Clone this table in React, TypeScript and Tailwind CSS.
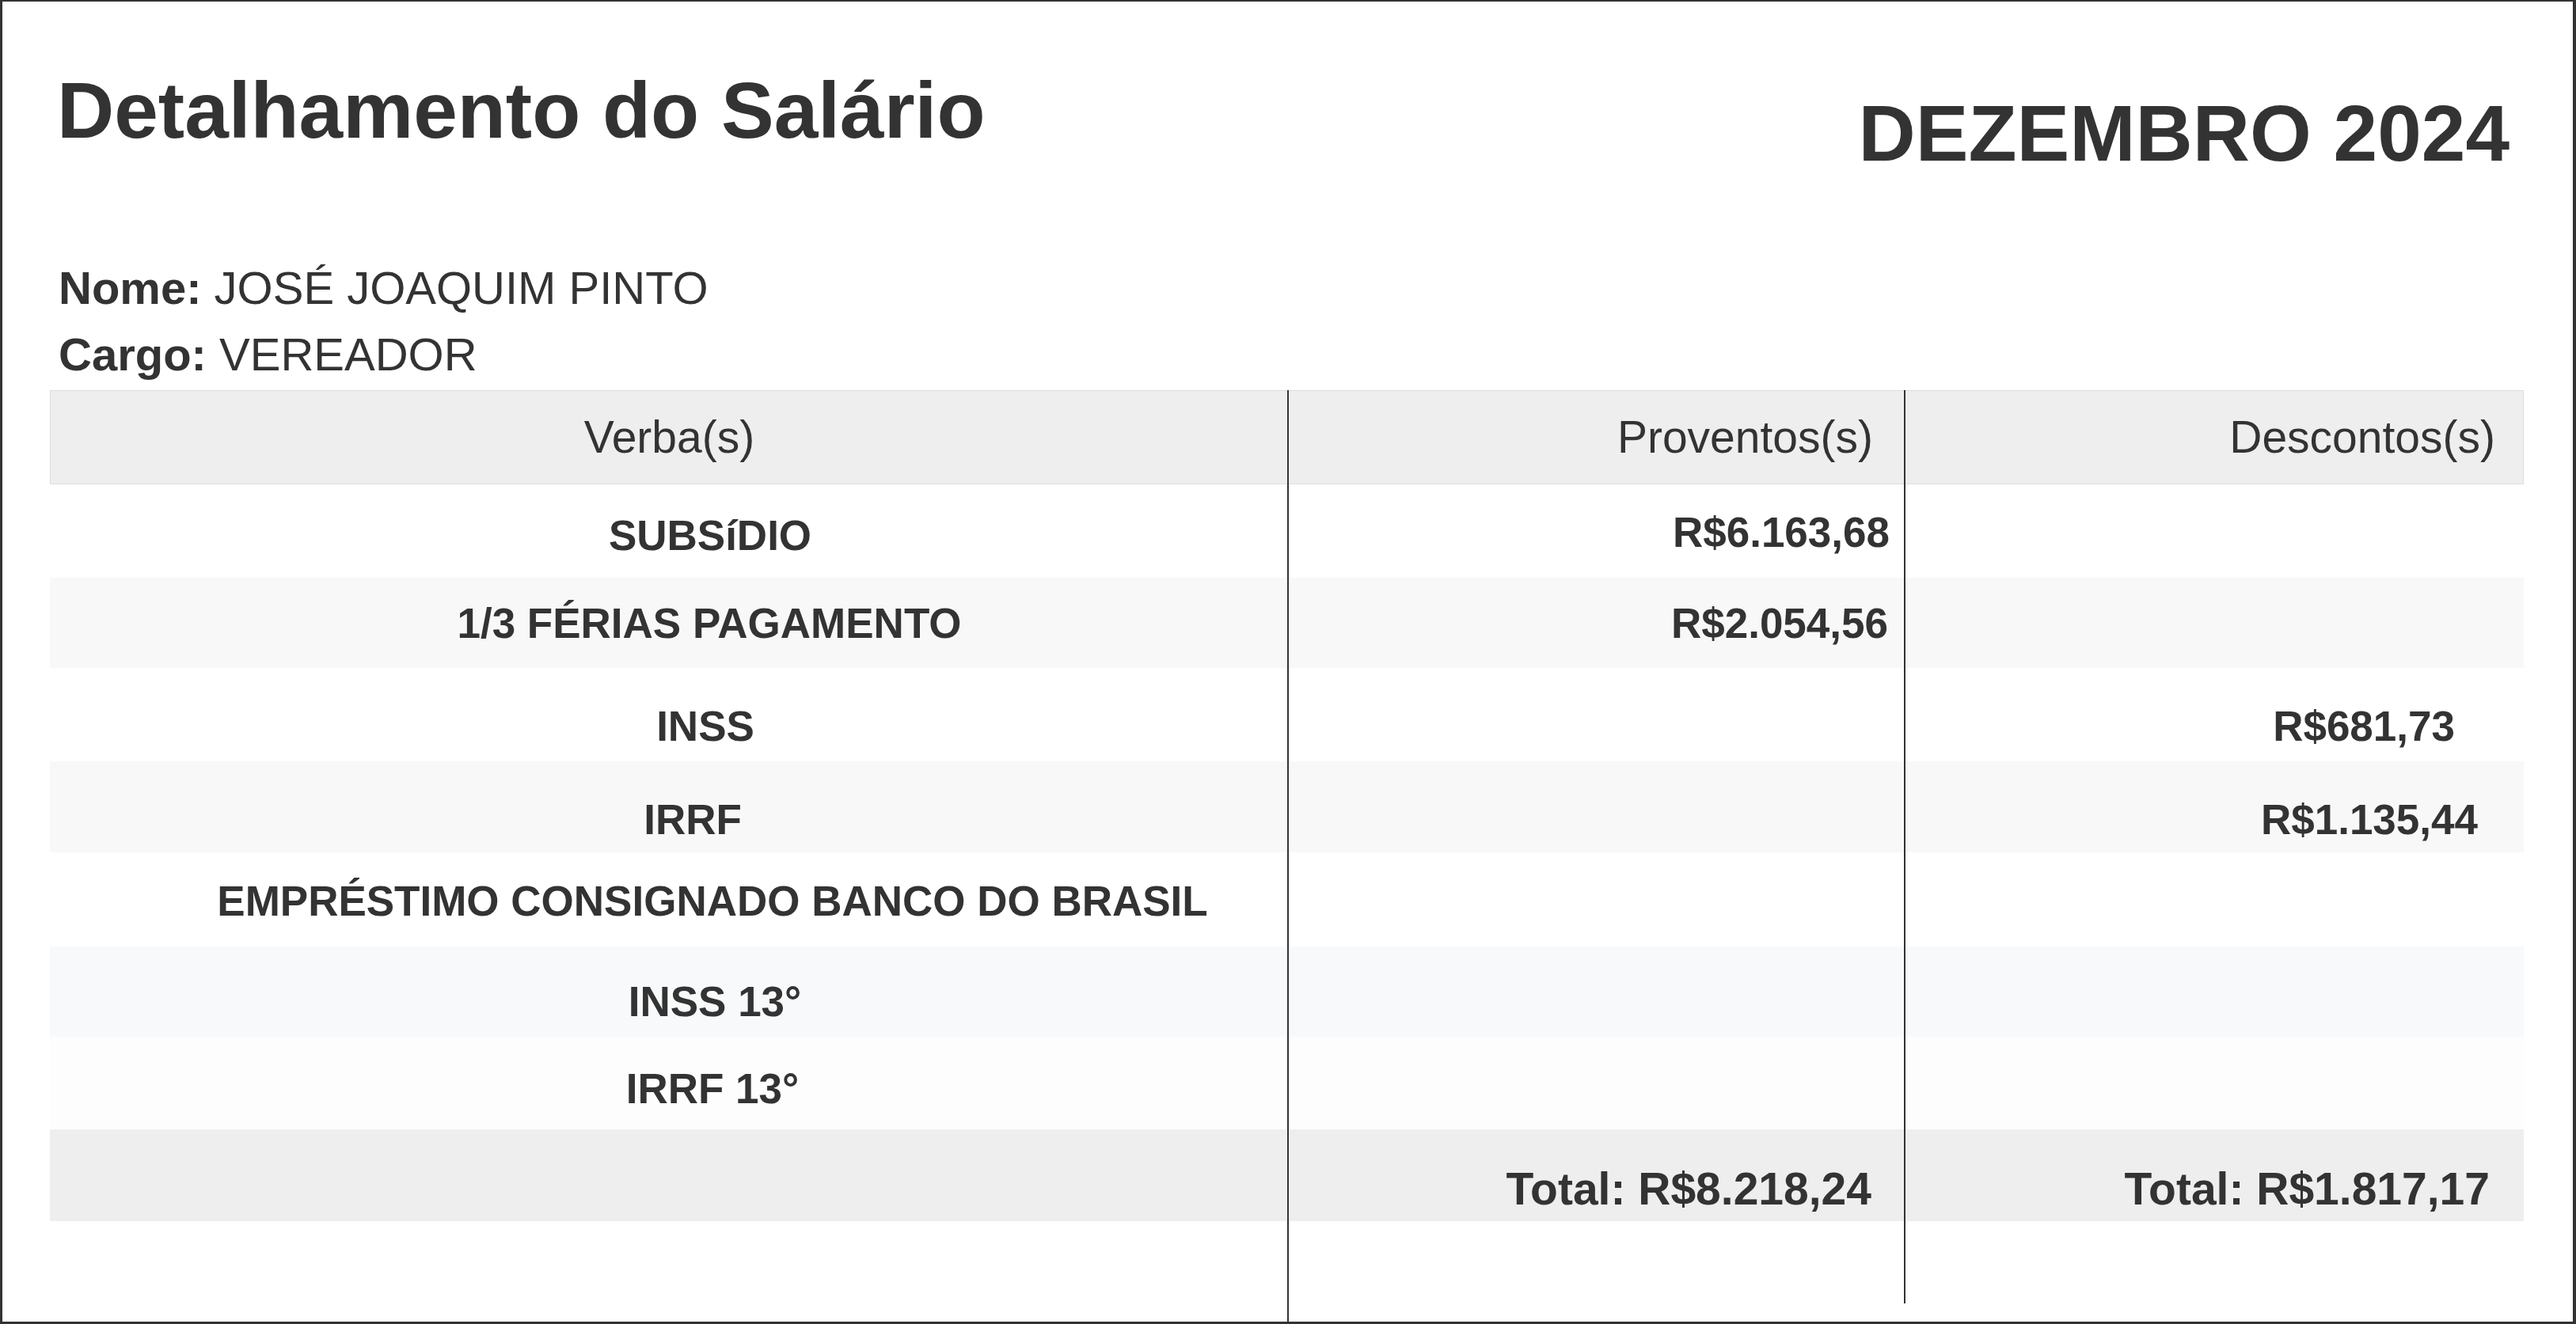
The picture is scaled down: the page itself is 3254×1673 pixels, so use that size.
import React from "react";

type Row = {
  label: string;
  labelPad: string;
  prov?: string;
  provPad?: string;
  desc?: string;
  descPad?: string;
  h: string;
  bg: string;
  pt: string;
  labelPt?: string;
};

const rows: Row[] = [
  { label: "SUBSíDIO", labelPad: "pl-[105px]", labelPt: "pt-[38px]", prov: "R$6.163,68", provPad: "pr-[18px]", h: "h-[118px]", bg: "bg-white", pt: "pt-[34px]" },
  { label: "1/3 FÉRIAS PAGAMENTO", labelPad: "pl-[103px]", prov: "R$2.054,56", provPad: "pr-[20px]", h: "h-[114px]", bg: "bg-[#f8f8f8]", pt: "pt-[31px]" },
  { label: "INSS", labelPad: "pl-[93px]", desc: "R$681,73", descPad: "pr-[87px]", h: "h-[118px]", bg: "bg-white", pt: "pt-[47px]" },
  { label: "IRRF", labelPad: "pl-[61px]", desc: "R$1.135,44", descPad: "pr-[58px]", h: "h-[115px]", bg: "bg-[#f8f8f8]", pt: "pt-[47px]" },
  { label: "EMPRÉSTIMO CONSIGNADO BANCO DO BRASIL", labelPad: "pl-[111px]", h: "h-[119px]", bg: "bg-white", pt: "pt-[35px]" },
  { label: "INSS 13°", labelPad: "pl-[117px]", h: "h-[114px]", bg: "bg-[#f8f9fa]", pt: "pt-[43px]" },
  { label: "IRRF 13°", labelPad: "pl-[111px]", h: "h-[117px]", bg: "bg-[#fdfdfd]", pt: "pt-[39px]" },
];

export default function App() {
  return (
    <div className="w-[3254px] h-[1673px] flex flex-col bg-white text-[#333] font-['Liberation_Sans',Arial,sans-serif] border-t-2 border-l-[3px] border-r-4 border-b-[3px] border-[#333] pl-[60px] pr-[62px] overflow-hidden">
      {/* Top header */}
      <div className="flex justify-between items-start pt-[87px] pl-[9px] pr-[18px]">
        <h1 className="text-[100px] leading-[100px] font-bold whitespace-nowrap">Detalhamento do Salário</h1>
        <div className="mt-[29px] text-[100px] leading-[100px] font-bold whitespace-nowrap">DEZEMBRO 2024</div>
      </div>

      <div className="mt-[104px] pl-[11px] text-[58px] leading-[84px] whitespace-nowrap">
        <div>
          <span className="font-bold">Nome:</span> JOSÉ JOAQUIM PINTO
        </div>
        <div>
          <span className="font-bold">Cargo:</span> VEREADOR
        </div>
      </div>

      {/* Table header */}
      <div className="mt-[3px] grid grid-cols-[1563px_779px_1fr] h-[119px] bg-[#eee] shadow-[inset_0_0_0_1px_#ddd] text-[57px] leading-[57px]">
        <div className="flex items-center justify-center pl-[2px]">Verba(s)</div>
        <div className="flex items-center justify-end pr-[39px] border-l-2 border-[#333]">Proventos(s)</div>
        <div className="flex items-center justify-end pr-[36px] border-l-2 border-[#333]">Descontos(s)</div>
      </div>

      {/* Rows */}
      {rows.map((r, i) => (
        <div key={i} className={`grid grid-cols-[1563px_779px_1fr] text-[53px] leading-[53px] font-bold ${r.h} ${r.bg}`}>
          <div className={`text-center whitespace-nowrap ${r.labelPad} ${r.labelPt ?? r.pt}`}>{r.label}</div>
          <div className={`text-right border-l-2 border-[#333] ${r.pt} ${r.provPad ?? ""}`}>{r.prov ?? ""}</div>
          <div className={`text-right border-l-2 border-[#333] ${r.pt} ${r.descPad ?? ""}`}>{r.desc ?? ""}</div>
        </div>
      ))}

      {/* Totals */}
      <div className="grid grid-cols-[1563px_779px_1fr] h-[116px] bg-[#eee] text-[57px] leading-[57px] font-bold">
        <div />
        <div className="text-right border-l-2 border-[#333] pt-[47px] pr-[41px] whitespace-nowrap">Total: R$8.218,24</div>
        <div className="text-right border-l-2 border-[#333] pt-[47px] pr-[43px] whitespace-nowrap">Total: R$1.817,17</div>
      </div>

      {/* Column lines continuing below */}
      <div className="flex-1 grid grid-cols-[1563px_779px_1fr] items-start">
        <div />
        <div className="h-full border-l-2 border-[#333]" />
        <div className="h-[104px] border-l-2 border-[#333]" />
      </div>
    </div>
  );
}
